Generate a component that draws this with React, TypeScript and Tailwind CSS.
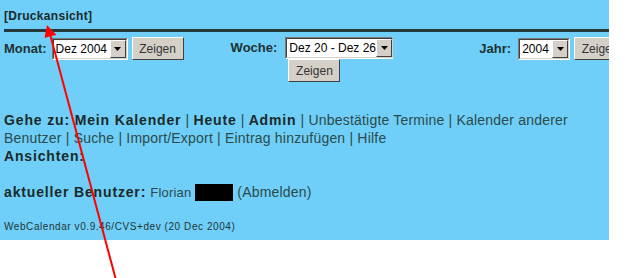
import React from "react";

const font = { fontFamily: '"Liberation Sans", Arial, sans-serif' };

function FakeSelect({ value, width }: { value: string; width: string }) {
  return (
    <div
      className={`flex h-[22px] items-stretch border border-t-[#7a7a7a] border-l-[#7a7a7a] border-r-white border-b-white bg-white ${width}`}
    >
      <div className="flex flex-1 items-stretch border border-t-[#404040] border-l-[#404040] border-r-[#d4d0c8] border-b-[#d4d0c8]">
        <span className="flex-1 truncate pl-[2px] text-[12px] leading-[18px] text-black">{value}</span>
        <span className="flex w-[16px] items-center justify-center border border-t-white border-l-white border-r-[#404040] border-b-[#404040] bg-[#d4d0c8]">
          <svg width="7" height="4" viewBox="0 0 7 4">
            <path d="M0 0h7L3.5 4z" fill="#000" />
          </svg>
        </span>
      </div>
    </div>
  );
}

function ZeigenButton({ className = "" }: { className?: string }) {
  return (
    <button
      type="button"
      className={`h-[23px] w-[52px] border border-t-white border-l-white border-r-[#404040] border-b-[#404040] bg-[#d4d0c8] text-[12px] text-[#333] ${className}`}
    >
      Zeigen
    </button>
  );
}

const strong = "font-bold tracking-[0.85px] text-[#1a2a2a]";

export default function App() {
  return (
    <div className="relative h-[278px] w-[640px] overflow-hidden bg-white" style={font}>
      <div className="w-[609px] overflow-hidden bg-[#6fcff8] pb-[7px] pl-[4px]">
        <div className="pt-[8px] text-[12px] font-bold leading-[16px] tracking-[0.3px] text-[#1a2a2a]">
          [Druckansicht]
        </div>
        <div className="mt-[5px] h-[3px] bg-[#24393b]" />

        <div className="mt-[5px] flex w-[700px] items-start">
          <div className="flex items-center">
            <span className="text-[13px] font-bold text-[#1d3233]">Monat:</span>
            <FakeSelect value="Dez 2004" width="ml-[5px] w-[76px]" />
            <ZeigenButton className="ml-[4px]" />
          </div>

          <div className="ml-[47px] flex flex-col items-center">
            <div className="flex items-center">
              <span className="text-[13px] font-bold text-[#1d3233]">Woche:</span>
              <FakeSelect value="Dez 20 - Dez 26" width="ml-[8px] w-[108px]" />
            </div>
            <ZeigenButton className="ml-[5px] w-[50px]" />
          </div>

          <div className="ml-[86px] flex items-center">
            <span className="text-[13px] font-bold text-[#1d3233]">Jahr:</span>
            <FakeSelect value="2004" width="ml-[7px] w-[52px]" />
            <ZeigenButton className="ml-[4px]" />
          </div>
        </div>

        <div className="mt-[29px] pr-[30px] text-[14px] leading-[18px] tracking-[0.2px] text-[#2b4a4b]">
          <span className={strong}>Gehe zu: Mein Kalender</span>
          {" | "}
          <span className={strong}>Heute</span>
          {" | "}
          <span className={strong}>Admin</span>
          {" | Unbestätigte Termine | Kalender anderer Benutzer | Suche | Import/Export | Eintrag hinzufügen | Hilfe"}
          <br />
          <span className={strong}>Ansichten:</span>
        </div>

        <div className="mt-[18px] text-[14px] leading-[18px] tracking-[0.2px] text-[#2b4a4b]">
          <span className={strong}>aktueller Benutzer:</span>{" "}
          <span className="text-[13px]">Florian </span>
          <span className="inline-block h-[17px] w-[38px] bg-black align-[-4px]" />{" "}
          (Abmelden)
        </div>

        <div className="mt-[19px] text-[10px] leading-[12px] tracking-[0.57px] text-[#1f3535]">
          WebCalendar v0.9.46/CVS+dev (20 Dec 2004)
        </div>
      </div>

      <svg className="pointer-events-none absolute left-0 top-0" width="640" height="278">
        <line x1="116" y1="280" x2="50" y2="34" stroke="#ff0000" strokeWidth="2" />
        <path d="M47 25 L44.5 38 L51 36 L56.5 35 Z" fill="#ff0000" />
      </svg>
    </div>
  );
}
